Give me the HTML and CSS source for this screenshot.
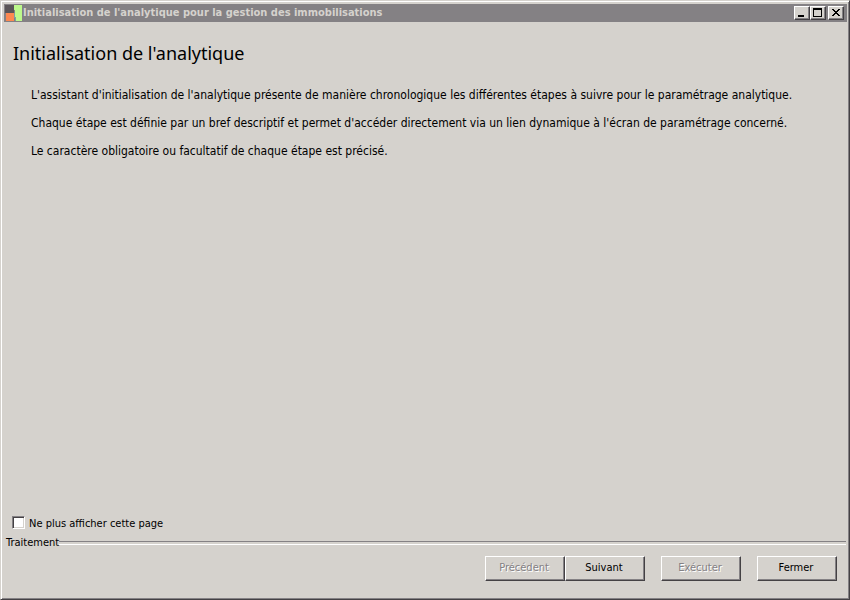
FILE: index.html
```html
<!DOCTYPE html>
<html lang="fr">
<head>
    <meta charset="UTF-8">
    <meta name="viewport" content="width=device-width, initial-scale=1.0">
    <title>Initialisation de l'analytique</title>
    <link rel="stylesheet" href="styles.css">
</head>
<body>
    <div class="window">
        <header class="title-bar">
            <svg class="app-icon" width="18" height="18" viewBox="0 0 18 18" shape-rendering="crispEdges" aria-hidden="true">
                <rect x="1" y="1" width="9" height="8" fill="#5b5558"/>
                <rect x="2" y="9" width="8" height="8" fill="#fd8850"/>
                <path d="M10 1h8v16h-6l-1-6z" fill="#bdf98c"/>
                <path d="M10 9h1v4h1v4h-1v-3h-1z" fill="#7b9fa0"/>
            </svg>
            <span class="title">Initialisation de l'analytique pour la gestion des immobilisations</span>
            <div class="window-buttons">
                <button type="button" class="window-button" aria-label="Réduire">
                    <svg width="10" height="9" viewBox="0 0 10 9" shape-rendering="crispEdges"><path d="M1 7h6v2H1z"/></svg>
                </button>
                <button type="button" class="window-button" aria-label="Agrandir">
                    <svg width="10" height="9" viewBox="0 0 10 9" shape-rendering="crispEdges"><path fill-rule="evenodd" d="M0 0h9v9H0zM1 2v6h7V2z"/></svg>
                </button>
                <button type="button" class="window-button close" aria-label="Fermer la fenêtre">
                    <svg width="10" height="9" viewBox="0 0 10 9" shape-rendering="crispEdges"><path d="M1 1h2v1h1v1h2V2h1V1h2v1H8v1H7v1H6v1h1v1h1v1h1v1H7V7H6V6H4v1H3v1H1V7h1V6h1V5h1V4H3V3H2V2H1z"/></svg>
                </button>
            </div>
        </header>

        <main class="content">
            <h1>Initialisation de l'analytique</h1>
            <div class="description">
                <p>L'assistant d'initialisation de l'analytique présente de manière chronologique les différentes étapes à suivre pour le paramétrage analytique.</p>
                <p>Chaque étape est définie par un bref descriptif et permet d'accéder directement via un lien dynamique à l'écran de paramétrage concerné.</p>
                <p>Le caractère obligatoire ou facultatif de chaque étape est précisé.</p>
            </div>
        </main>

        <div class="option">
            <input type="checkbox" id="hidePage">
            <label for="hidePage">Ne plus afficher cette page</label>
        </div>

        <fieldset class="treatment">
            <legend>Traitement</legend>
            <div class="actions">
                <div class="nav-buttons">
                    <button type="button" class="button" disabled>Précédent</button>
                    <button type="button" class="button">Suivant</button>
                </div>
                <button type="button" class="button" disabled>Exécuter</button>
                <button type="button" class="button">Fermer</button>
            </div>
        </fieldset>
    </div>
</body>
</html>
```

FILE: styles.css
```css
* {
    box-sizing: border-box;
}
body {
    margin: 0;
    background: #d5d2cd;
    color: #000;
    font-family: "DejaVu Sans Condensed", "DejaVu Sans", sans-serif;
    font-size: 11px;
    line-height: 14px;
}
.window {
    display: flex;
    flex-direction: column;
    min-height: 100vh;
    padding: 2px 2px 2px 3px;
    border: 1px solid #d5d2cd;
    border-right-color: #444144;
    border-bottom-color: #444144;
    box-shadow: inset 1px 1px #fff, inset -1px -1px #848184;
}
.title-bar {
    display: flex;
    align-items: center;
    height: 18px;
    margin-top: 1px;
    padding-right: 3px;
    background: #848184;
    color: #d5d2cd;
}
.app-icon {
    flex: none;
    margin-right: 1px;
}
.title {
    flex: 1;
    font-weight: bold;
}
.window-buttons {
    display: flex;
}
.window-button {
    display: flex;
    align-items: center;
    justify-content: center;
    width: 16px;
    height: 14px;
    padding: 0 0 1px;
    border: 1px solid;
    border-color: #fff #444144 #444144 #fff;
    background: #d5d2cd;
    box-shadow: inset -1px -1px #848184;
}
.window-button.close {
    margin-left: 2px;
}
.content {
    flex: 1;
    padding: 19px 9px;
}
h1 {
    margin: 0;
    font-family: "Noto Sans", "Open Sans", sans-serif;
    font-size: 18px;
    font-weight: normal;
    line-height: 24px;
}
.description {
    padding: 23px 18px 0;
    font-size: 12px;
}
.description p {
    margin: 0 0 14px;
}
.option {
    display: flex;
    align-items: center;
    gap: 4px;
    padding-left: 8px;
}
.option input {
    appearance: none;
    width: 13px;
    height: 13px;
    margin: 0 0 3px;
    border: 1px solid;
    border-color: #848184 #fff #fff #848184;
    background: #fff;
    box-shadow: inset 1px 1px #444144, inset -1px -1px #d5d2cd;
}
.option input:checked {
    background: #444144;
}
.treatment {
    min-width: 0;
    margin: 4px 0 0;
    padding: 6px 0 16px;
    border: 0;
}
.treatment legend {
    display: flex;
    align-items: center;
    width: 100%;
    padding: 0 1px 0 2px;
}
.treatment legend::after {
    content: "";
    flex: 1;
    height: 2px;
    border-top: 1px solid #848184;
    border-bottom: 1px solid #fff;
}
.actions {
    display: flex;
    justify-content: flex-end;
    gap: 16px;
    padding-right: 10px;
}
.nav-buttons {
    display: flex;
}
.button {
    width: 80px;
    height: 25px;
    padding: 0 2px 2px 0;
    border: 1px solid;
    border-color: #fff #444144 #444144 #fff;
    background: #d5d2cd;
    box-shadow: inset -1px -1px #848184;
    color: #000;
    font: inherit;
}
.button:disabled {
    color: #848184;
    text-shadow: 1px 1px #fff;
}
```
